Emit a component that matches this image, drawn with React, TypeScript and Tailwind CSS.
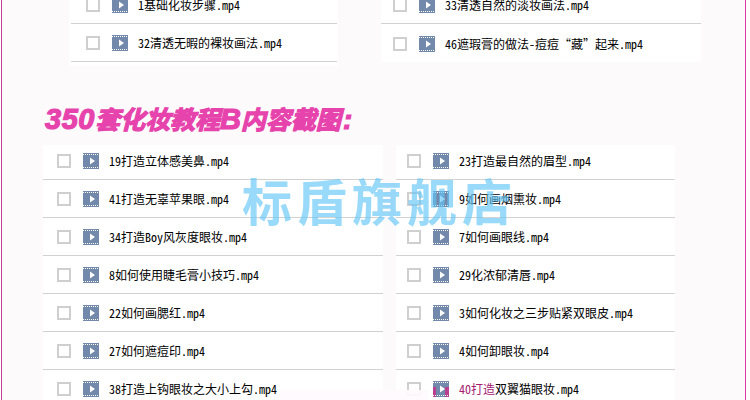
const top = [
  ["1基础化妆步骤.mp4", "33清透自然的淡妆画法.mp4"],
  ["32清透无暇的裸妆画法.mp4", "46遮瑕膏的做法-痘痘“藏”起来.mp4"],
];
const left = ["19打造立体感美鼻.mp4", "41打造无辜苹果眼.mp4", "34打造Boy风灰度眼妆.mp4", "8如何使用睫毛膏小技巧.mp4", "22如何画腮红.mp4", "27如何遮痘印.mp4", "38打造上钩眼妆之大小上勾.mp4"];
const right = ["23打造最自然的眉型.mp4", "9如何画烟熏妆.mp4", "7如何画眼线.mp4", "29化浓郁清唇.mp4", "3如何化妆之三步贴紧双眼皮.mp4", "4如何卸眼妆.mp4", "40打造双翼猫眼妆.mp4"];

function Film({ pink }: { pink?: boolean }) {
  return (
    <svg width="16" height="16" viewBox="0 0 16 16" className="block shrink-0">
      <rect width="16" height="16" fill="#7289ab" />
      {pink && <path d="M0 6H3V16H0ZM12 6H16V16H12Z" fill="#b8408f" />}
      <path d="M0 1.500H16M0 14.500H16" stroke="#fff" strokeDasharray="1 1" />
      <path d="M7 4.500L12 8L7 11.500Z" fill="#fff" />
    </svg>
  );
}

function Row({ text, pink, last, first, pl }: { text: string; pink?: boolean; last?: boolean; first?: boolean; pl: string }) {
  const head = pink ? text.slice(0, 4) : "";
  const tail = pink ? text.slice(4) : text;
  return (
    <div className={`flex items-center ${pl} ${first ? "h-[35px] pb-[2px]" : "h-[38px] pt-px"} ${last ? "border-b-0" : "border-b border-[#d2d2d2]"}`}>
      <span className="h-[14px] w-[14px] shrink-0 border-2 border-[#cfcfcf] bg-white" />
      <span className="ml-[12px]"><Film pink={pink} /></span>
      <span className="ml-[10px] whitespace-nowrap text-[12px] leading-none text-black">
        {head && <span className="text-[#a4206f]">{head}</span>}
        {tail}
      </span>
    </div>
  );
}

export default function App() {
  return (
    <div className="relative h-[400px] w-[750px] overflow-hidden bg-white font-['Noto_Sans_Mono_CJK_SC','Noto_Sans_CJK_SC',monospace]">
      <div className="ml-px h-[400px] w-[745px] overflow-hidden border-x border-l-[#c0418f] border-r-[#e0359f] bg-[#fdfafc]">
        <div className="-mt-[14px] flex items-start">
          <div className="ml-[67px] w-[269px] bg-white pb-[4px] pl-[2px] pr-px">
            {top.map((r) => <Row key={r[0]} text={r[0]} pl="pl-[15px]" />)}
          </div>
          <div className="ml-[43px] w-[320px] bg-white">
            {top.map((r, i) => <Row key={r[1]} text={r[1]} last={i === 1} pl="pl-[12px]" />)}
          </div>
        </div>
        <h2 className="ml-[43px] mt-[38px] h-[30px] whitespace-nowrap font-['Liberation_Sans','Noto_Sans_CJK_SC',sans-serif] text-[25px] font-bold italic leading-[30px] text-[#e643ac] [-webkit-text-stroke:1.2px_#e643ac]">
          <span className="text-[29px] tracking-[0.500px]">350</span>套化妆教程<span className="text-[29px]">B</span>内容截图<span className="ml-[2px] text-[28px]">:</span>
        </h2>
        <div className="mt-[11px] flex">
          <div className="ml-[41px] w-[340px] bg-white">
            {left.map((t, i) => <Row key={t} text={t} first={i === 0} pl="pl-[14px]" />)}
          </div>
          <div className="ml-[13px] w-[279px] bg-white">
            {right.map((t, i) => <Row key={t} text={t} pink={i === 6} first={i === 0} pl="pl-[11px]" />)}
          </div>
        </div>
      </div>
      <div className="absolute left-[242px] top-[169px] whitespace-nowrap font-['Noto_Sans_CJK_SC',sans-serif] text-[50px] font-bold leading-[60px] tracking-[5px] text-[#62c4f6]/65">
        标盾旗舰店
      </div>
      <div className="absolute left-[280px] top-[390px] h-[10px] w-[148px] bg-[#fefafd]/90" />
    </div>
  );
}
